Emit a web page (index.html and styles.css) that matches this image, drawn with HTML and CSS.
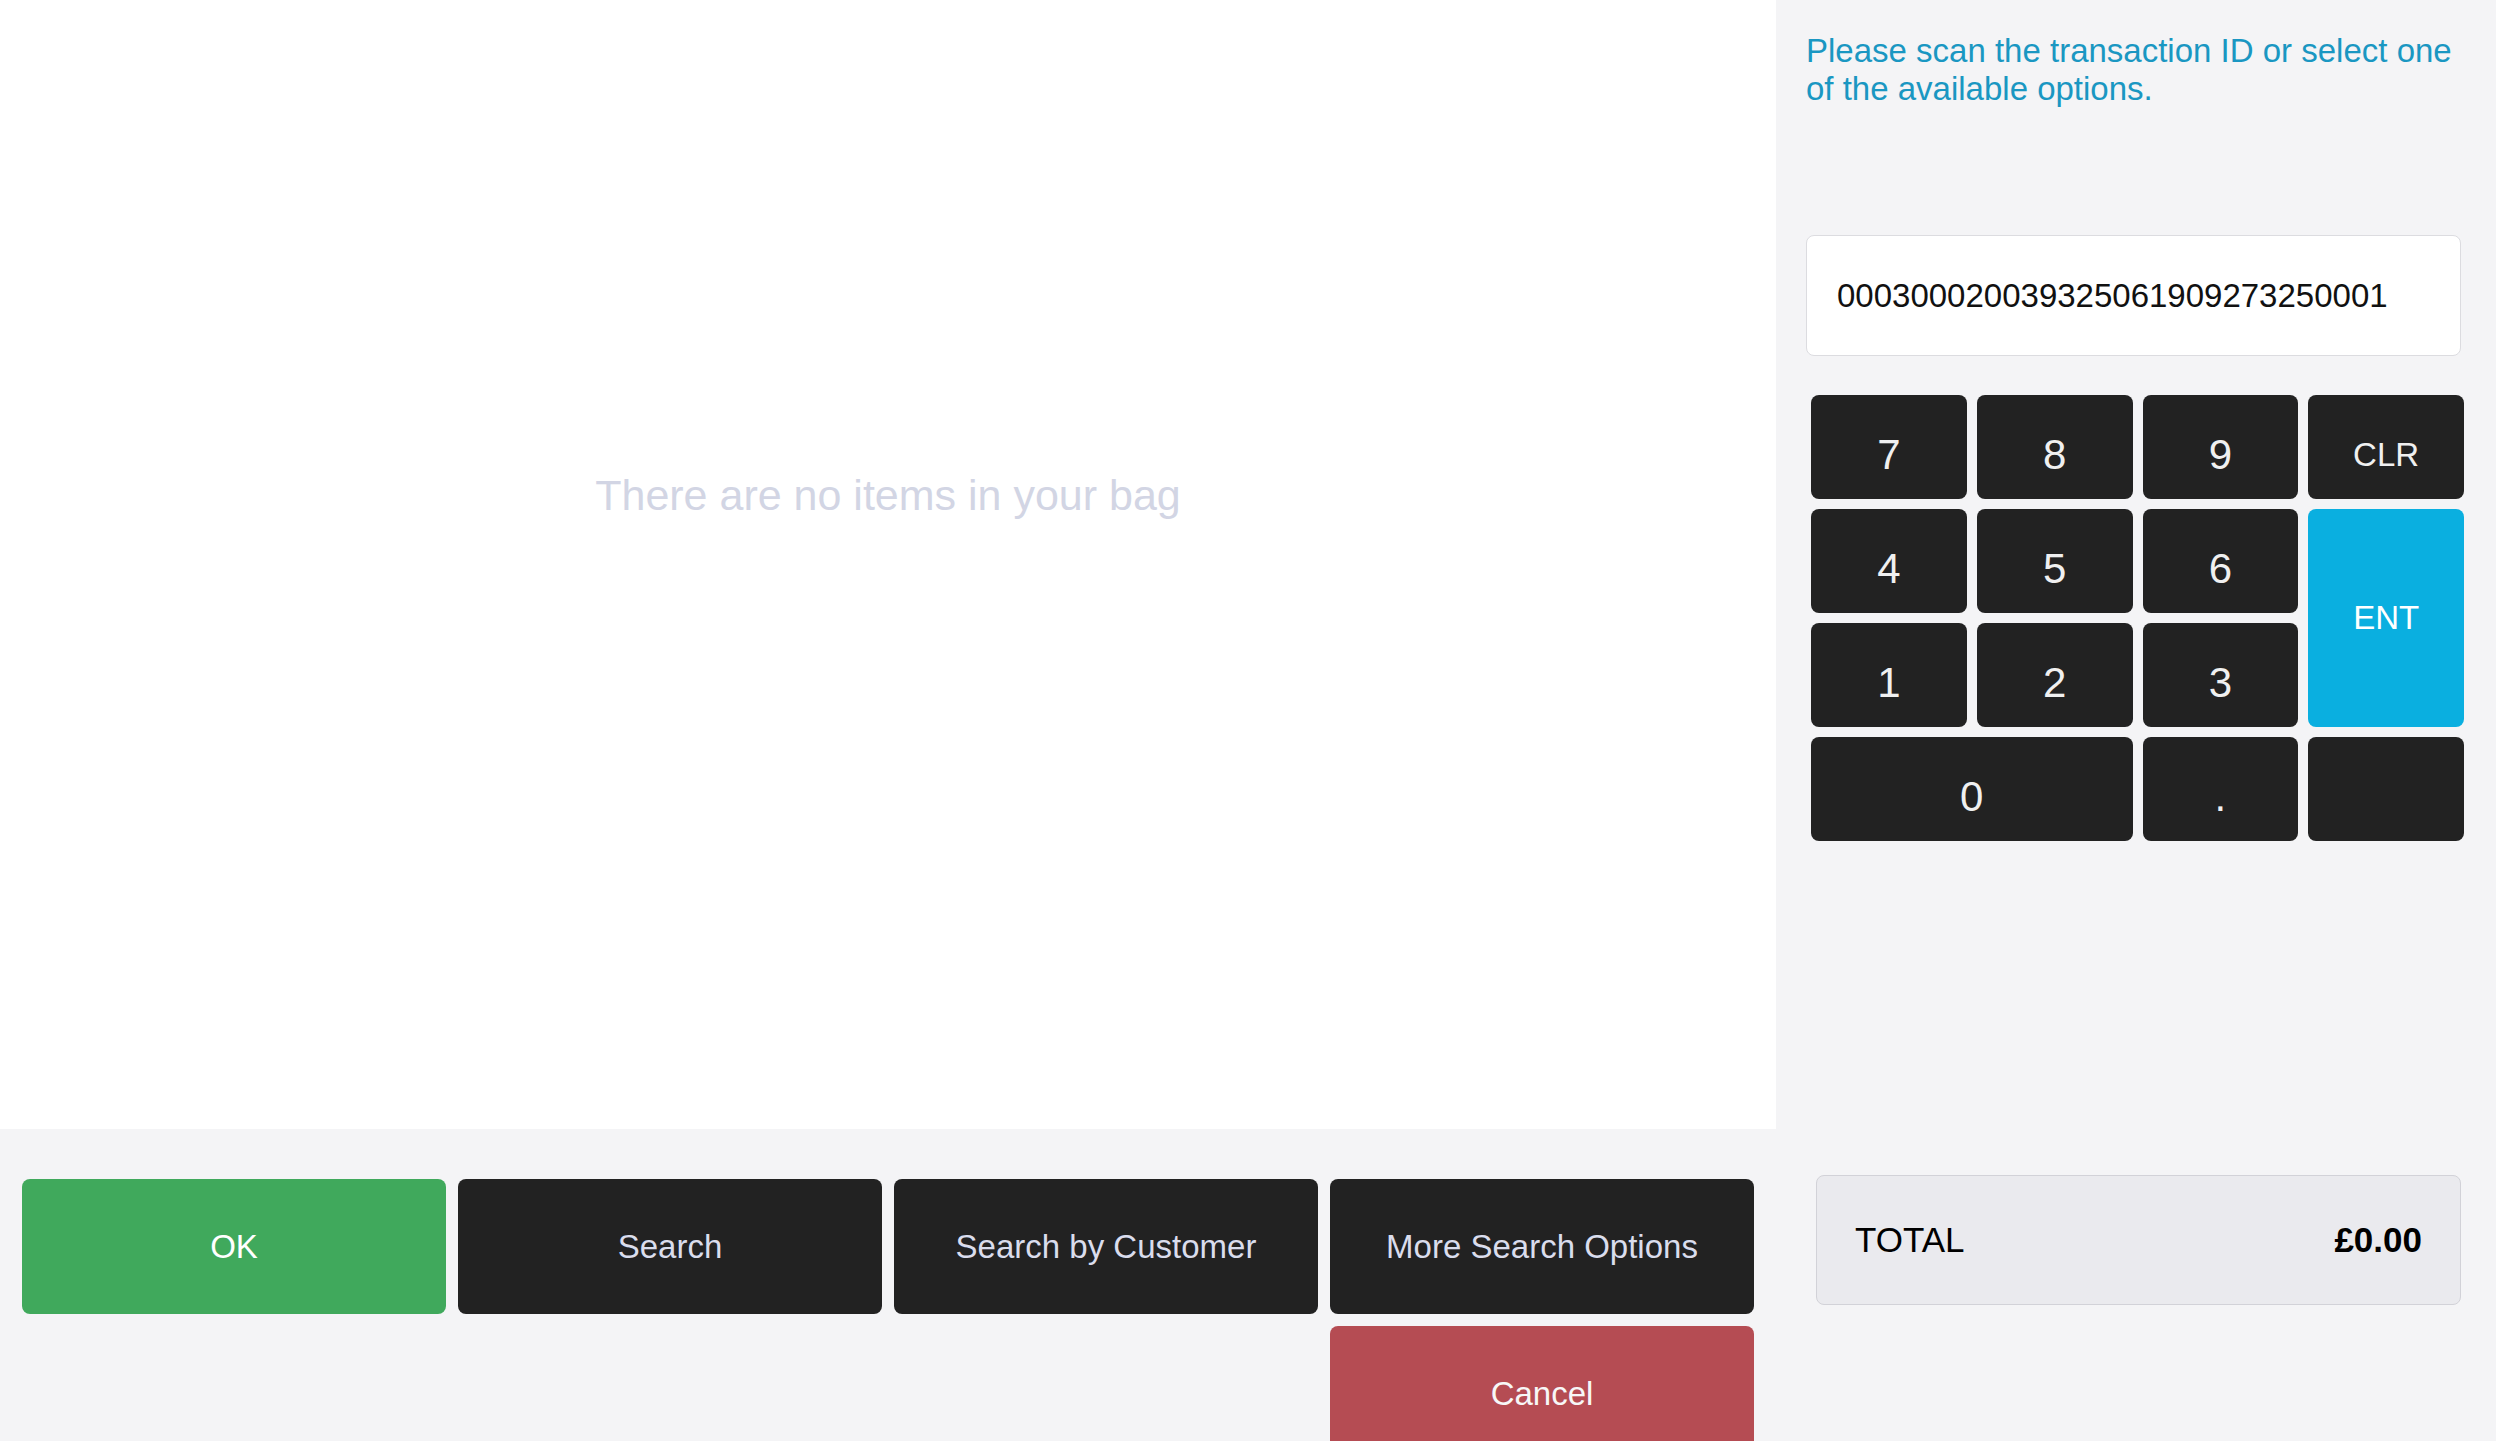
FILE: index.html
```html
<!DOCTYPE html>
<html lang="en">
<head>
  <meta charset="UTF-8" />
  <meta name="viewport" content="width=device-width, initial-scale=1.0" />
  <title>Find Transaction</title>
  <link rel="stylesheet" href="styles.css">
</head>
<body>
  <div class="app">
    <div class="main">
      <div class="bag">
        <p class="bag-empty">There are no items in your bag</p>
      </div>
      <div class="actions">
        <button class="btn btn-ok">OK</button>
        <button class="btn">Search</button>
        <button class="btn">Search by Customer</button>
        <button class="btn">More Search Options</button>
        <button class="btn btn-cancel">Cancel</button>
      </div>
    </div>

    <div class="side">
      <p class="prompt">Please scan the transaction ID or select one of the available options.</p>
      <div class="scan-input">000300020039325061909273250001</div>

      <div class="keypad">
        <button class="key">7</button>
        <button class="key">8</button>
        <button class="key">9</button>
        <button class="key key-small">CLR</button>
        <button class="key">4</button>
        <button class="key">5</button>
        <button class="key">6</button>
        <button class="key key-ent">ENT</button>
        <button class="key">1</button>
        <button class="key">2</button>
        <button class="key">3</button>
        <button class="key key-zero">0</button>
        <button class="key">.</button>
        <button class="key"></button>
      </div>

      <div class="total">
        <span>TOTAL</span>
        <span class="total-value">£0.00</span>
      </div>
    </div>
  </div>
</body>
</html>
```

FILE: styles.css
```css
body {
  margin: 0;
  font-family: 'Liberation Sans', Arial, Helvetica, sans-serif;
  background: #f4f4f6;
  overflow: hidden;
}
.app {
  display: grid;
  grid-template-columns: 1776px 1fr;
  height: 100vh;
}
.main {
  display: flex;
  flex-direction: column;
}
.bag {
  height: 1129px;
  background: #ffffff;
  display: flex;
  align-items: center;
  justify-content: center;
  padding-bottom: 138px;
  box-sizing: border-box;
}
.bag-empty {
  margin: 0;
  font-size: 43px;
  color: #d2d5e4;
}
.actions {
  display: grid;
  grid-template-columns: repeat(4, 1fr);
  grid-auto-rows: 135px;
  gap: 12px;
  padding: 50px 22px 0;
}
.btn {
  font-family: inherit;
  font-size: 33px;
  border: none;
  border-radius: 8px;
  background: #222222;
  color: #dadded;
  cursor: pointer;
}
.btn-ok {
  background: #40a95c;
  color: #ffffff;
}
.btn-cancel {
  grid-column: 4;
  background: #b54c53;
  color: #f7f7f7;
}
.side {
  display: flex;
  flex-direction: column;
  padding: 32px 32px 0 30px;
}
.prompt {
  margin: 0;
  font-size: 33px;
  color: #1a97c2;
}
.scan-input {
  margin: 127px 3px 0 0;
  height: 121px;
  box-sizing: border-box;
  display: flex;
  align-items: center;
  padding: 0 30px;
  background: #ffffff;
  border: 1px solid #dcdce0;
  border-radius: 8px;
  font-size: 33px;
  color: #111111;
}
.keypad {
  margin-top: 39px;
  padding-left: 5px;
  display: grid;
  grid-template-columns: repeat(4, 1fr);
  grid-auto-rows: 104px;
  gap: 10px;
}
.key {
  font-family: inherit;
  font-size: 42px;
  padding: 16px 0 0;
  border: none;
  border-radius: 8px;
  background: #222222;
  color: #f0f0f0;
  cursor: pointer;
}
.key-small {
  font-size: 33px;
}
.key-ent {
  grid-row: span 2;
  font-size: 33px;
  padding: 0;
  background: #0aafe0;
  color: #ffffff;
}
.key-zero {
  grid-column: span 2;
}
.total {
  margin: 334px 3px 0 10px;
  height: 130px;
  box-sizing: border-box;
  display: flex;
  align-items: center;
  justify-content: space-between;
  padding: 0 38px;
  background: #eaeaee;
  border: 1px solid #d2d2d8;
  border-radius: 8px;
  font-size: 35px;
  color: #000000;
}
.total-value {
  font-weight: bold;
}
```
